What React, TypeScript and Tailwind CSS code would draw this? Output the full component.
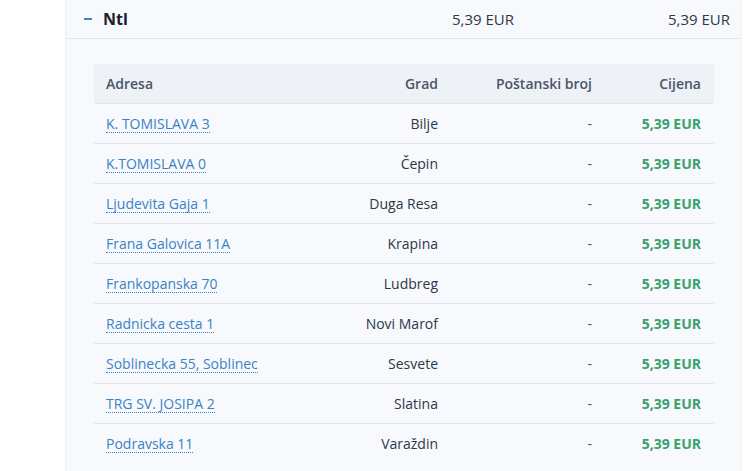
const rows = [
  { adresa: "K. TOMISLAVA 3", grad: "Bilje" },
  { adresa: "K.TOMISLAVA 0", grad: "Čepin" },
  { adresa: "Ljudevita Gaja 1", grad: "Duga Resa" },
  { adresa: "Frana Galovica 11A", grad: "Krapina" },
  { adresa: "Frankopanska 70", grad: "Ludbreg" },
  { adresa: "Radnicka cesta 1", grad: "Novi Marof" },
  { adresa: "Soblinecka 55, Soblinec", grad: "Sesvete" },
  { adresa: "TRG SV. JOSIPA 2", grad: "Slatina" },
  { adresa: "Podravska 11", grad: "Varaždin" },
]

export default function App() {
  return (
    <div
      className="flex h-[471px] w-[755px] overflow-hidden bg-white text-[14px] text-[#2d3748]"
      style={{ fontFamily: '"Open Sans", "Noto Sans", sans-serif' }}
    >
      <div className="w-[65px] shrink-0" />
      <div className="flex w-[677px] shrink-0 flex-col border-x border-[#eef1f5] bg-[#f7f9fc]">
        {/* group header */}
        <div className="flex h-[39px] shrink-0 items-center border-b border-[#e3e8ef] text-[15px]">
          <div className="flex w-[242px] items-center pl-[18px]">
            <span className="block h-[2px] w-[8px] bg-[#3b82c4]" />
            <span className="ml-[11px] text-[16px] font-bold text-[#1a202c]">Ntl</span>
          </div>
          <div className="w-[206px] text-right">5,39 EUR</div>
          <div className="flex-1 pr-[11px] text-right">5,39 EUR</div>
        </div>

        {/* detail table */}
        <div className="pl-[28px] pr-[27px] pt-[25px]">
          <div className="grid grid-cols-[1fr_130px_154px_122px]">
            <div className="contents font-semibold text-[#4a5568]">
              <div className="flex h-[39px] items-center bg-[#eef2f7] pl-[12px]">Adresa</div>
              <div className="flex h-[39px] items-center justify-end bg-[#eef2f7]">Grad</div>
              <div className="flex h-[39px] items-center justify-end bg-[#eef2f7]">Poštanski broj</div>
              <div className="flex h-[39px] items-center justify-end bg-[#eef2f7] pr-[13px]">Cijena</div>
            </div>
            {rows.map((r) => (
              <div key={r.adresa} className="contents">
                <div className="flex h-[40px] items-center border-t border-[#e2e6ec] pl-[12px]">
                  <a className="whitespace-nowrap border-b border-dotted border-[#3b82c4] leading-[17px] text-[#3b82c4]">
                    {r.adresa}
                  </a>
                </div>
                <div className="flex h-[40px] items-center justify-end border-t border-[#e2e6ec] text-[#2d3748]">
                  {r.grad}
                </div>
                <div className="flex h-[40px] items-center justify-end border-t border-[#e2e6ec] text-[#4a5568]">
                  -
                </div>
                <div className="flex h-[40px] items-center justify-end border-t border-[#e2e6ec] pr-[13px] font-bold text-[#38a169]">
                  5,39 EUR
                </div>
              </div>
            ))}
          </div>
        </div>
      </div>
    </div>
  )
}
